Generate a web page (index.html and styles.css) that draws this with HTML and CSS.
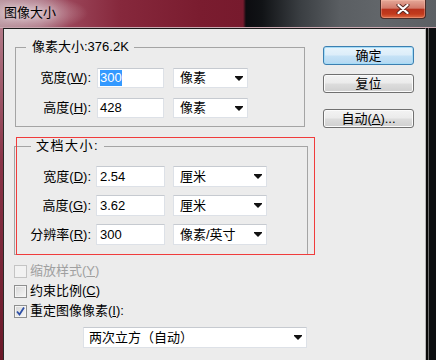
FILE: index.html
```html
<!DOCTYPE html>
<html lang="zh-CN">
<head>
<meta charset="utf-8">
<title>图像大小</title>
<link rel="stylesheet" href="styles.css">
</head>
<body>
<div class="window">
  <div class="titlebar">
    <span class="title">图像大小</span>
    <div class="close">
      <svg width="14" height="10" viewBox="0 0 14 10">
        <path d="M2.5 1 L11.5 9 M11.5 1 L2.5 9" stroke="#5a2a24" stroke-width="4" stroke-linecap="round"/>
        <path d="M2.5 1 L11.5 9 M11.5 1 L2.5 9" stroke="#ffffff" stroke-width="2.2" stroke-linecap="round"/>
      </svg>
    </div>
  </div>
  <div class="frame">
    <div class="edge-left"></div>
    <div class="client">
      <div class="top">
        <div class="left-col">
          <fieldset class="group g1">
            <legend class="legend l1">像素大小:376.2K</legend>
            <div class="row">
              <span class="label">宽度(<u>W</u>):</span>
              <span class="input"><span class="sel">300</span></span>
              <span class="select">像素<svg class="arrow" width="8" height="5" viewBox="0 0 8 5"><path d="M0 0 H8 V1 L4 5 L0 1 Z" fill="#111"/></svg></span>
            </div>
            <div class="row">
              <span class="label">高度(<u>H</u>):</span>
              <span class="input">428</span>
              <span class="select">像素<svg class="arrow" width="8" height="5" viewBox="0 0 8 5"><path d="M0 0 H8 V1 L4 5 L0 1 Z" fill="#111"/></svg></span>
            </div>
          </fieldset>
          <fieldset class="group g2">
            <legend class="legend l2">文档大小:</legend>
            <div class="row">
              <span class="label">宽度(<u>D</u>):</span>
              <span class="input">2.54</span>
              <span class="select">厘米<svg class="arrow" width="8" height="5" viewBox="0 0 8 5"><path d="M0 0 H8 V1 L4 5 L0 1 Z" fill="#111"/></svg></span>
            </div>
            <div class="row">
              <span class="label">高度(<u>G</u>):</span>
              <span class="input">3.62</span>
              <span class="select">厘米<svg class="arrow" width="8" height="5" viewBox="0 0 8 5"><path d="M0 0 H8 V1 L4 5 L0 1 Z" fill="#111"/></svg></span>
            </div>
            <div class="row">
              <span class="label">分辨率(<u>R</u>):</span>
              <span class="input">300</span>
              <span class="select">像素/英寸<svg class="arrow" width="8" height="5" viewBox="0 0 8 5"><path d="M0 0 H8 V1 L4 5 L0 1 Z" fill="#111"/></svg></span>
            </div>
          </fieldset>
        </div>
        <div class="buttons">
          <div class="btn default">确定</div>
          <div class="btn b2">复位</div>
          <div class="btn b3">自动(<u>A</u>)...</div>
        </div>
      </div>
      <div class="checks">
        <div class="check disabled"><span class="box"></span><span>缩放样式(<u>Y</u>)</span></div>
        <div class="check"><span class="box"></span><span>约束比例(<u>C</u>)</span></div>
        <div class="check"><span class="box"><svg width="11" height="11" viewBox="0 0 11 11"><path d="M2 5.5 L4.5 8.5 L9 1.5" stroke="#2d4fa6" stroke-width="1.8" fill="none"/></svg></span><span>重定图像像素(<u>I</u>):</span></div>
      </div>
      <div class="select resample">两次立方（自动）<svg class="arrow" width="8" height="5" viewBox="0 0 8 5"><path d="M0 0 H8 V1 L4 5 L0 1 Z" fill="#111"/></svg></div>
      <div class="annot"></div>
    </div>
    <div class="edge-right"></div>
  </div>
</div>
</body>
</html>
```
FILE: styles.css
```css
html, body {
  margin: 0;
  padding: 0;
  background: #0b0c0e;
}
body {
  font-family: "Liberation Sans", "Noto Sans CJK SC", sans-serif;
  font-size: 13px;
  line-height: 16px;
  color: #000;
}
u { text-decoration: underline; text-underline-offset: 1px; }

.window {
  width: 436px;
  height: 360px;
  display: flex;
  flex-direction: column;
  overflow: hidden;
}

.titlebar {
  height: 28px;
  flex: none;
  box-sizing: border-box;
  display: flex;
  align-items: flex-start;
  border-bottom: 1px solid #c9a8b0;
  background:
    radial-gradient(ellipse 60px 18px at 28px 13px, rgba(230,215,220,0.75), rgba(230,215,220,0) 100%),
    linear-gradient(to right, #b48e98 0px, #ab7282 40px, #9a4458 70px, #86283c 120px, #7a1c2f 200px, #771a2d 243px, #0c0c10 246px, #111316 262px, #3a3e42 300px, #5a5e62 340px, #62666a 380px, #5c6064 436px);
}
.title {
  padding-left: 4px;
  line-height: 26px;
  font-size: 13px;
  color: #000;
  text-shadow: 0 0 6px rgba(255,255,255,0.6);
}
.close {
  margin-left: auto;
  margin-right: 10px;
  width: 46px;
  height: 19px;
  box-sizing: border-box;
  border: 1px solid #4a2c28;
  border-top: none;
  border-radius: 0 0 4px 4px;
  background: linear-gradient(#e4a898 0%, #d27a6a 45%, #b8321c 52%, #c23a1c 78%, #de6a44 100%);
  box-shadow: inset 0 0 0 1px rgba(255,200,180,0.35);
  display: flex;
  align-items: center;
  justify-content: center;
}

.frame {
  flex: 1;
  display: flex;
  min-height: 0;
}
.edge-left {
  width: 3px;
  flex: none;
  background: linear-gradient(#b27a88, #8a3448 40%, #6a1828);
}
.edge-right {
  width: 10px;
  flex: none;
  background: linear-gradient(to right, #0a0a0a 0 2px, #6c6c6c 2px 3px, #0c0e10 3px);
}
.client {
  flex: 1;
  position: relative;
  background: #ececec;
  border-top: 1px solid #1c1c1c;
  border-left: 1px solid #2a2a2a;
  border-right: 1px solid #b8b8b8;
  padding-top: 10px;
  box-sizing: border-box;
}

.top {
  display: flex;
  align-items: flex-start;
  padding-left: 10px;
}
.left-col {
  width: 294px;
  display: flex;
  flex-direction: column;
}
.group {
  margin: 0;
  min-width: 0;
  box-sizing: border-box;
  border: 1px solid #a4a4a4;
}
.g1 {
  width: 290px;
  margin-left: 1px;
  padding: 13px 0 8px 0;
}
.g2 {
  width: 294px;
  margin-top: 11px;
  padding: 12px 0 9px 0;
}
.legend {
  line-height: 16px;
  font-size: 13px;
}
.l1 {
  margin-left: 10px;
  padding: 0 5px 0 6px;
}
.l2 {
  margin-left: 16px;
  padding: 0 5px;
  letter-spacing: 1.5px;
}

.row {
  display: flex;
  align-items: center;
  height: 20px;
}
.g1 .row + .row { margin-top: 10px; }
.g2 .row { height: 21px; }
.g2 .row + .row { margin-top: 8px; }

.label {
  width: 75px;
  text-align: right;
  white-space: nowrap;
}
.g2 .label { width: 76px; }

.input {
  box-sizing: border-box;
  height: 100%;
  width: 67px;
  margin-left: 6px;
  padding-left: 2px;
  background: #fff;
  border: 1px solid #dde1e7;
  border-top-color: #c6cad0;
  display: flex;
  align-items: center;
}
.g2 .input {
  width: 69px;
  margin-left: 5px;
  padding-left: 3px;
}
.sel {
  background: #3399ff;
  color: #fff;
  line-height: 16px;
}

.select {
  box-sizing: border-box;
  height: 100%;
  width: 75px;
  margin-left: 9px;
  padding-left: 6px;
  padding-right: 4px;
  background: #fff;
  border: 1px solid #dde1e7;
  border-top-color: #c6cad0;
  display: flex;
  align-items: center;
  justify-content: space-between;
  white-space: nowrap;
}
.g2 .select {
  width: 94px;
  margin-left: 8px;
}
.arrow { flex: none; }

.buttons {
  margin-left: 15px;
  margin-top: 7px;
  width: 91px;
  display: flex;
  flex-direction: column;
}
.btn {
  box-sizing: border-box;
  height: 19px;
  border: 1px solid #707070;
  border-radius: 3px;
  background: linear-gradient(#f3f3f3 0%, #ebebeb 48%, #dddddd 52%, #cfcfcf 100%);
  box-shadow: inset 0 0 0 1px #fbfbfb;
  text-align: center;
  line-height: 17px;
  white-space: nowrap;
}
.btn.default {
  border-color: #3c7fb1;
  background: linear-gradient(#e8f4fc 0%, #dcedf9 48%, #c6e2f6 52%, #b4d8f2 100%);
  box-shadow: inset 0 0 0 1px #a6dcf6;
}
.b2 { margin-top: 9px; }
.b3 { margin-top: 16px; }

.checks {
  padding-left: 10px;
  margin-top: 6px;
}
.check {
  display: flex;
  align-items: center;
  height: 20px;
}
.check.disabled { color: #a0a0a0; }
.box {
  box-sizing: border-box;
  width: 13px;
  height: 13px;
  margin-right: 3px;
  border: 1px solid #8e8f8f;
  background: linear-gradient(135deg, #d6d6d6, #f7f7f7);
  box-shadow: inset 0 0 0 1px #f4f4f4;
  display: flex;
  align-items: center;
  justify-content: center;
}
.check.disabled .box {
  border-color: #c4c4c4;
  background: #f2f2f2;
  box-shadow: none;
}

.resample {
  margin-left: 79px;
  margin-top: 6px;
  width: 224px;
  height: 21px;
  padding-left: 5px;
}

.annot {
  position: absolute;
  left: 12px;
  top: 108px;
  width: 299px;
  height: 118px;
  box-sizing: border-box;
  border: 1px solid #f03c3c;
  pointer-events: none;
}
```
